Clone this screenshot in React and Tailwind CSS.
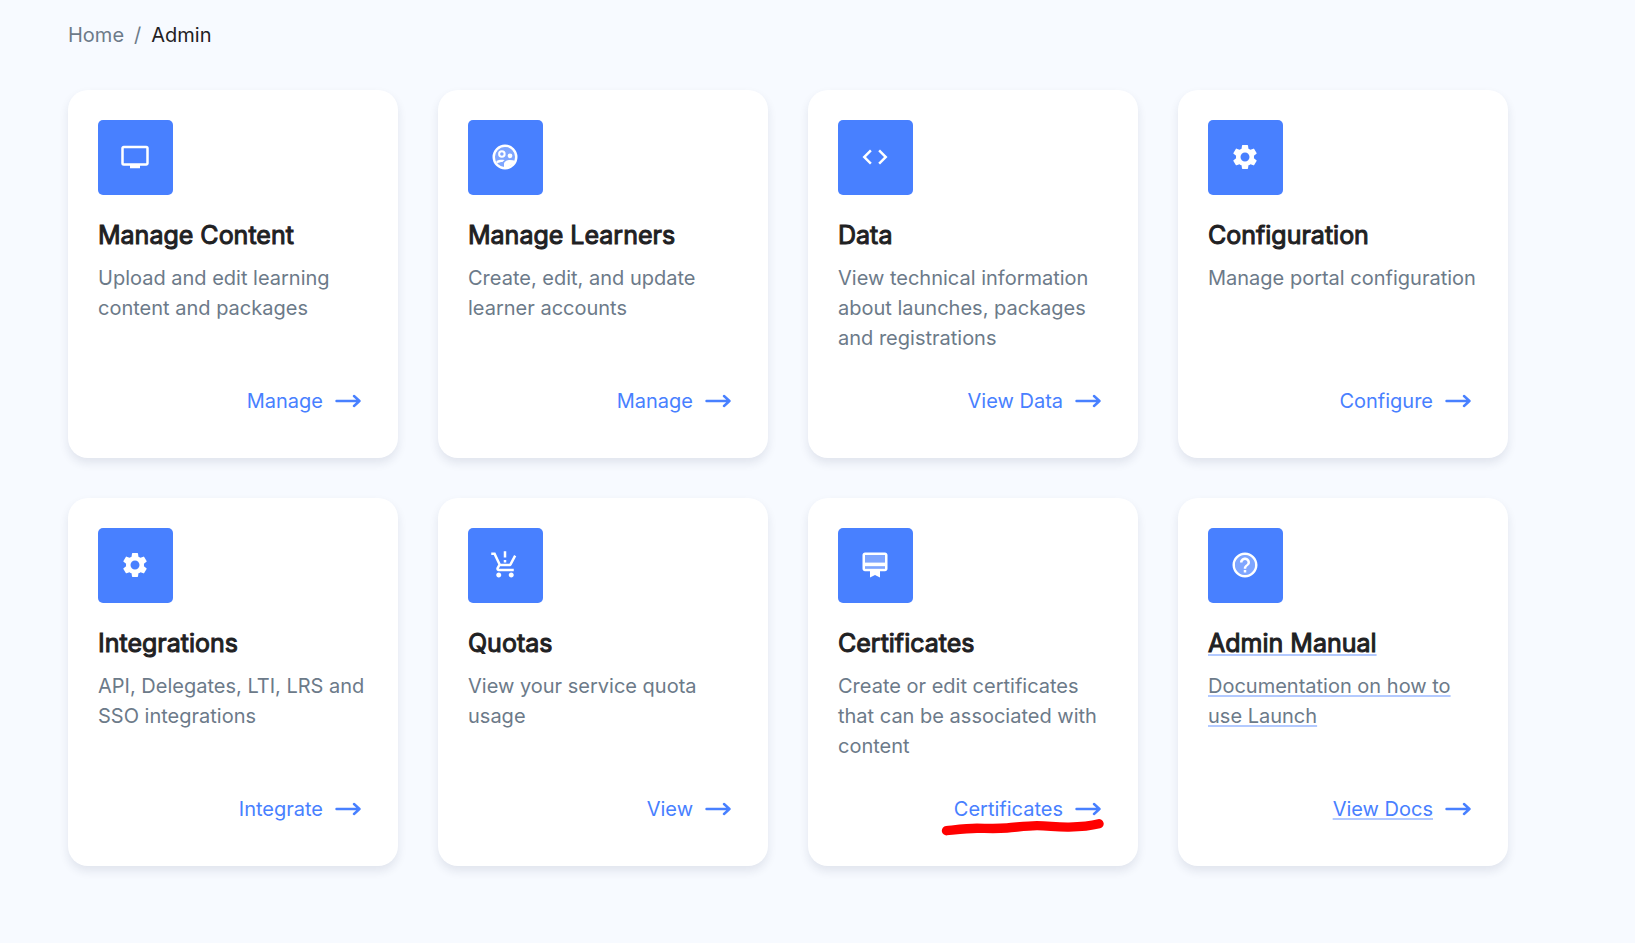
import React from 'react';
import { MdOutlinePersonalVideo, MdCode, MdSettings } from 'react-icons/md';

const TwoTone = ({ size, children }) => (
    <svg width={size} height={size} viewBox="0 0 24 24" fill="currentColor" aria-hidden="true">
        {children}
    </svg>
);

const LearnersIcon = ({ size }) => (
    <TwoTone size={size}>
        <circle cx="12" cy="12" r="8" opacity="0.3" />
        <circle cx="12" cy="12" r="9" fill="none" stroke="currentColor" strokeWidth="2" />
        <circle cx="9.5" cy="9.5" r="2.2" fill="none" stroke="currentColor" strokeWidth="1.6" />
        <circle cx="16" cy="11" r="1.9" />
        <path d="M5 15.2C6.2 14.6 8 14.2 9.6 14.2C10.3 14.2 11 14.3 11.7 14.5C10.9 14.9 10.4 15.4 10 16C8.4 16 7 16.4 5.9 17.2Z" />
        <path d="M16 14.4C13.6 14.4 11.2 15.6 11.2 17.6V20.5H14L18.8 17.2L20 14.9C18.9 14.6 17.4 14.4 16 14.4Z" />
    </TwoTone>
);

const QuotaIcon = ({ size }) => (
    <TwoTone size={size}>
        <path d="M13 10h-2V8h2v2zm0-4h-2V1h2v5zM7 18c-1.1 0-1.99.9-1.99 2S5.9 22 7 22s2-.9 2-2-.9-2-2-2zm10 0c-1.1 0-1.99.9-1.99 2s.89 2 1.99 2 2-.9 2-2-.9-2-2-2zm-8.9-5h7.45c.75 0 1.41-.41 1.75-1.03L21 4.96 19.25 4l-3.7 7H8.53L4.27 2H1v2h2l3.6 7.59-1.35 2.44C4.52 15.37 5.48 17 7 17h12v-2H7l1.1-2z" />
    </TwoTone>
);

const CertificateIcon = ({ size }) => (
    <TwoTone size={size}>
        <path d="M4 13h16v2H4zM4 4h16v6H4z" opacity="0.3" />
        <path d="M20 2H4c-1.11 0-2 .89-2 2v11c0 1.11.89 2 2 2h4v5l4-2 4 2v-5h4c1.11 0 2-.89 2-2V4c0-1.11-.89-2-2-2zm0 13H4v-2h16v2zm0-5H4V4h16v6z" />
    </TwoTone>
);

const HelpIcon = ({ size }) => (
    <TwoTone size={size}>
        <circle cx="12" cy="12" r="8" opacity="0.3" />
        <path d="M11 18h2v-2h-2v2zm1-16C6.48 2 2 6.48 2 12s4.48 10 10 10 10-4.48 10-10S17.52 2 12 2zm0 18c-4.41 0-8-3.59-8-8s3.59-8 8-8 8 3.59 8 8-3.59 8-8 8zm0-14c-2.21 0-4 1.79-4 4h2c0-1.1.9-2 2-2s2 .9 2 2c0 2-3 1.75-3 5h2c0-2.25 3-2.5 3-5 0-2.21-1.79-4-4-4z" />
    </TwoTone>
);

const cards = [
    { title: 'Manage Content', text: 'Upload and edit learning content and packages', action: 'Manage', Icon: MdOutlinePersonalVideo },
    { title: 'Manage Learners', text: 'Create, edit, and update learner accounts', action: 'Manage', Icon: LearnersIcon },
    { title: 'Data', text: 'View technical information about launches, packages and registrations', action: 'View Data', Icon: MdCode },
    { title: 'Configuration', text: 'Manage portal configuration', action: 'Configure', Icon: MdSettings },
    { title: 'Integrations', text: 'API, Delegates, LTI, LRS and SSO integrations', action: 'Integrate', Icon: MdSettings },
    { title: 'Quotas', text: 'View your service quota usage', action: 'View', Icon: QuotaIcon },
    { title: 'Certificates', text: 'Create or edit certificates that can be associated with content', action: 'Certificates', Icon: CertificateIcon, marked: true },
    { title: 'Admin Manual', text: 'Documentation on how to use Launch', action: 'View Docs', Icon: HelpIcon, underlined: true },
];

const Arrow = () => (
    <svg width="26" height="14" viewBox="0 0 26 14" fill="none" stroke="currentColor" strokeWidth="2.4" strokeLinecap="round" strokeLinejoin="round" aria-hidden="true">
        <path d="M1.5 7H24.5M19 2L24.5 7L19 12" />
    </svg>
);

// Red pen line under a link
const Marker = () => (
    <svg className="absolute top-[23px] -right-[4px] pointer-events-none" width="164" height="20" viewBox="0 0 164 20" fill="none" aria-hidden="true">
        <path d="M5.5 13.7C16 12.6 26 11.3 36 11.2C46 11.3 54 11.9 66 11C76 10.2 86 8.7 96 8.6C108 8.6 114 10.3 128 10.1C142 9.8 150 8.8 158 6.8" stroke="#ff0000" strokeWidth="9.4" strokeLinecap="round" />
    </svg>
);

const AdminCard = ({ title, text, action, Icon, marked, underlined }) => {
    const line = underlined ? 'underline decoration-[#b3caff] decoration-2 underline-offset-2' : '';

    return (
        <section className="flex flex-col bg-white rounded-[20px] pt-[30px] px-[30px] pb-[42px] shadow-[0_5px_10px_rgba(30,41,80,0.1)]">
            <div className="w-[75px] h-[75px] p-[22px] rounded-[5px] bg-[#4880ff] text-white">
                <Icon size={30} />
            </div>
            <h2 className={`mt-[25px] text-[25px] leading-[30px] font-normal [-webkit-text-stroke:1px_#1f2123] text-[#1f2123] ${line}`}>{title}</h2>
            <p className={`mt-[13px] min-h-[90px] text-[20px] leading-[30px] text-[#6c7a89] ${line}`}>{text}</p>
            <a href="#" className="relative self-end mt-[33px] mr-[7px] flex items-center gap-[12px] text-[20px] leading-[30px] text-[#4880ff]">
                <span className={line}>{action}</span>
                <Arrow />
                {marked && <Marker />}
            </a>
        </section>
    );
};

const App = () => {
    return (
        <div className="min-h-screen bg-[#f7faff] pt-[20px] pb-[40px] pl-[68px] pr-[127px] font-['Inter',sans-serif]">
            <nav aria-label="Breadcrumb" className="flex gap-[10px] text-[20px] leading-[30px] text-[#6c7a89]">
                <a href="#">Home</a>
                <span>/</span>
                <span className="text-[#1f2123]" aria-current="page">Admin</span>
            </nav>
            <main className="mt-[40px] grid gap-[40px] grid-cols-[repeat(auto-fill,minmax(330px,1fr))]">
                {cards.map(card => (
                    <AdminCard key={card.title} {...card} />
                ))}
            </main>
        </div>
    );
};

export default App;
